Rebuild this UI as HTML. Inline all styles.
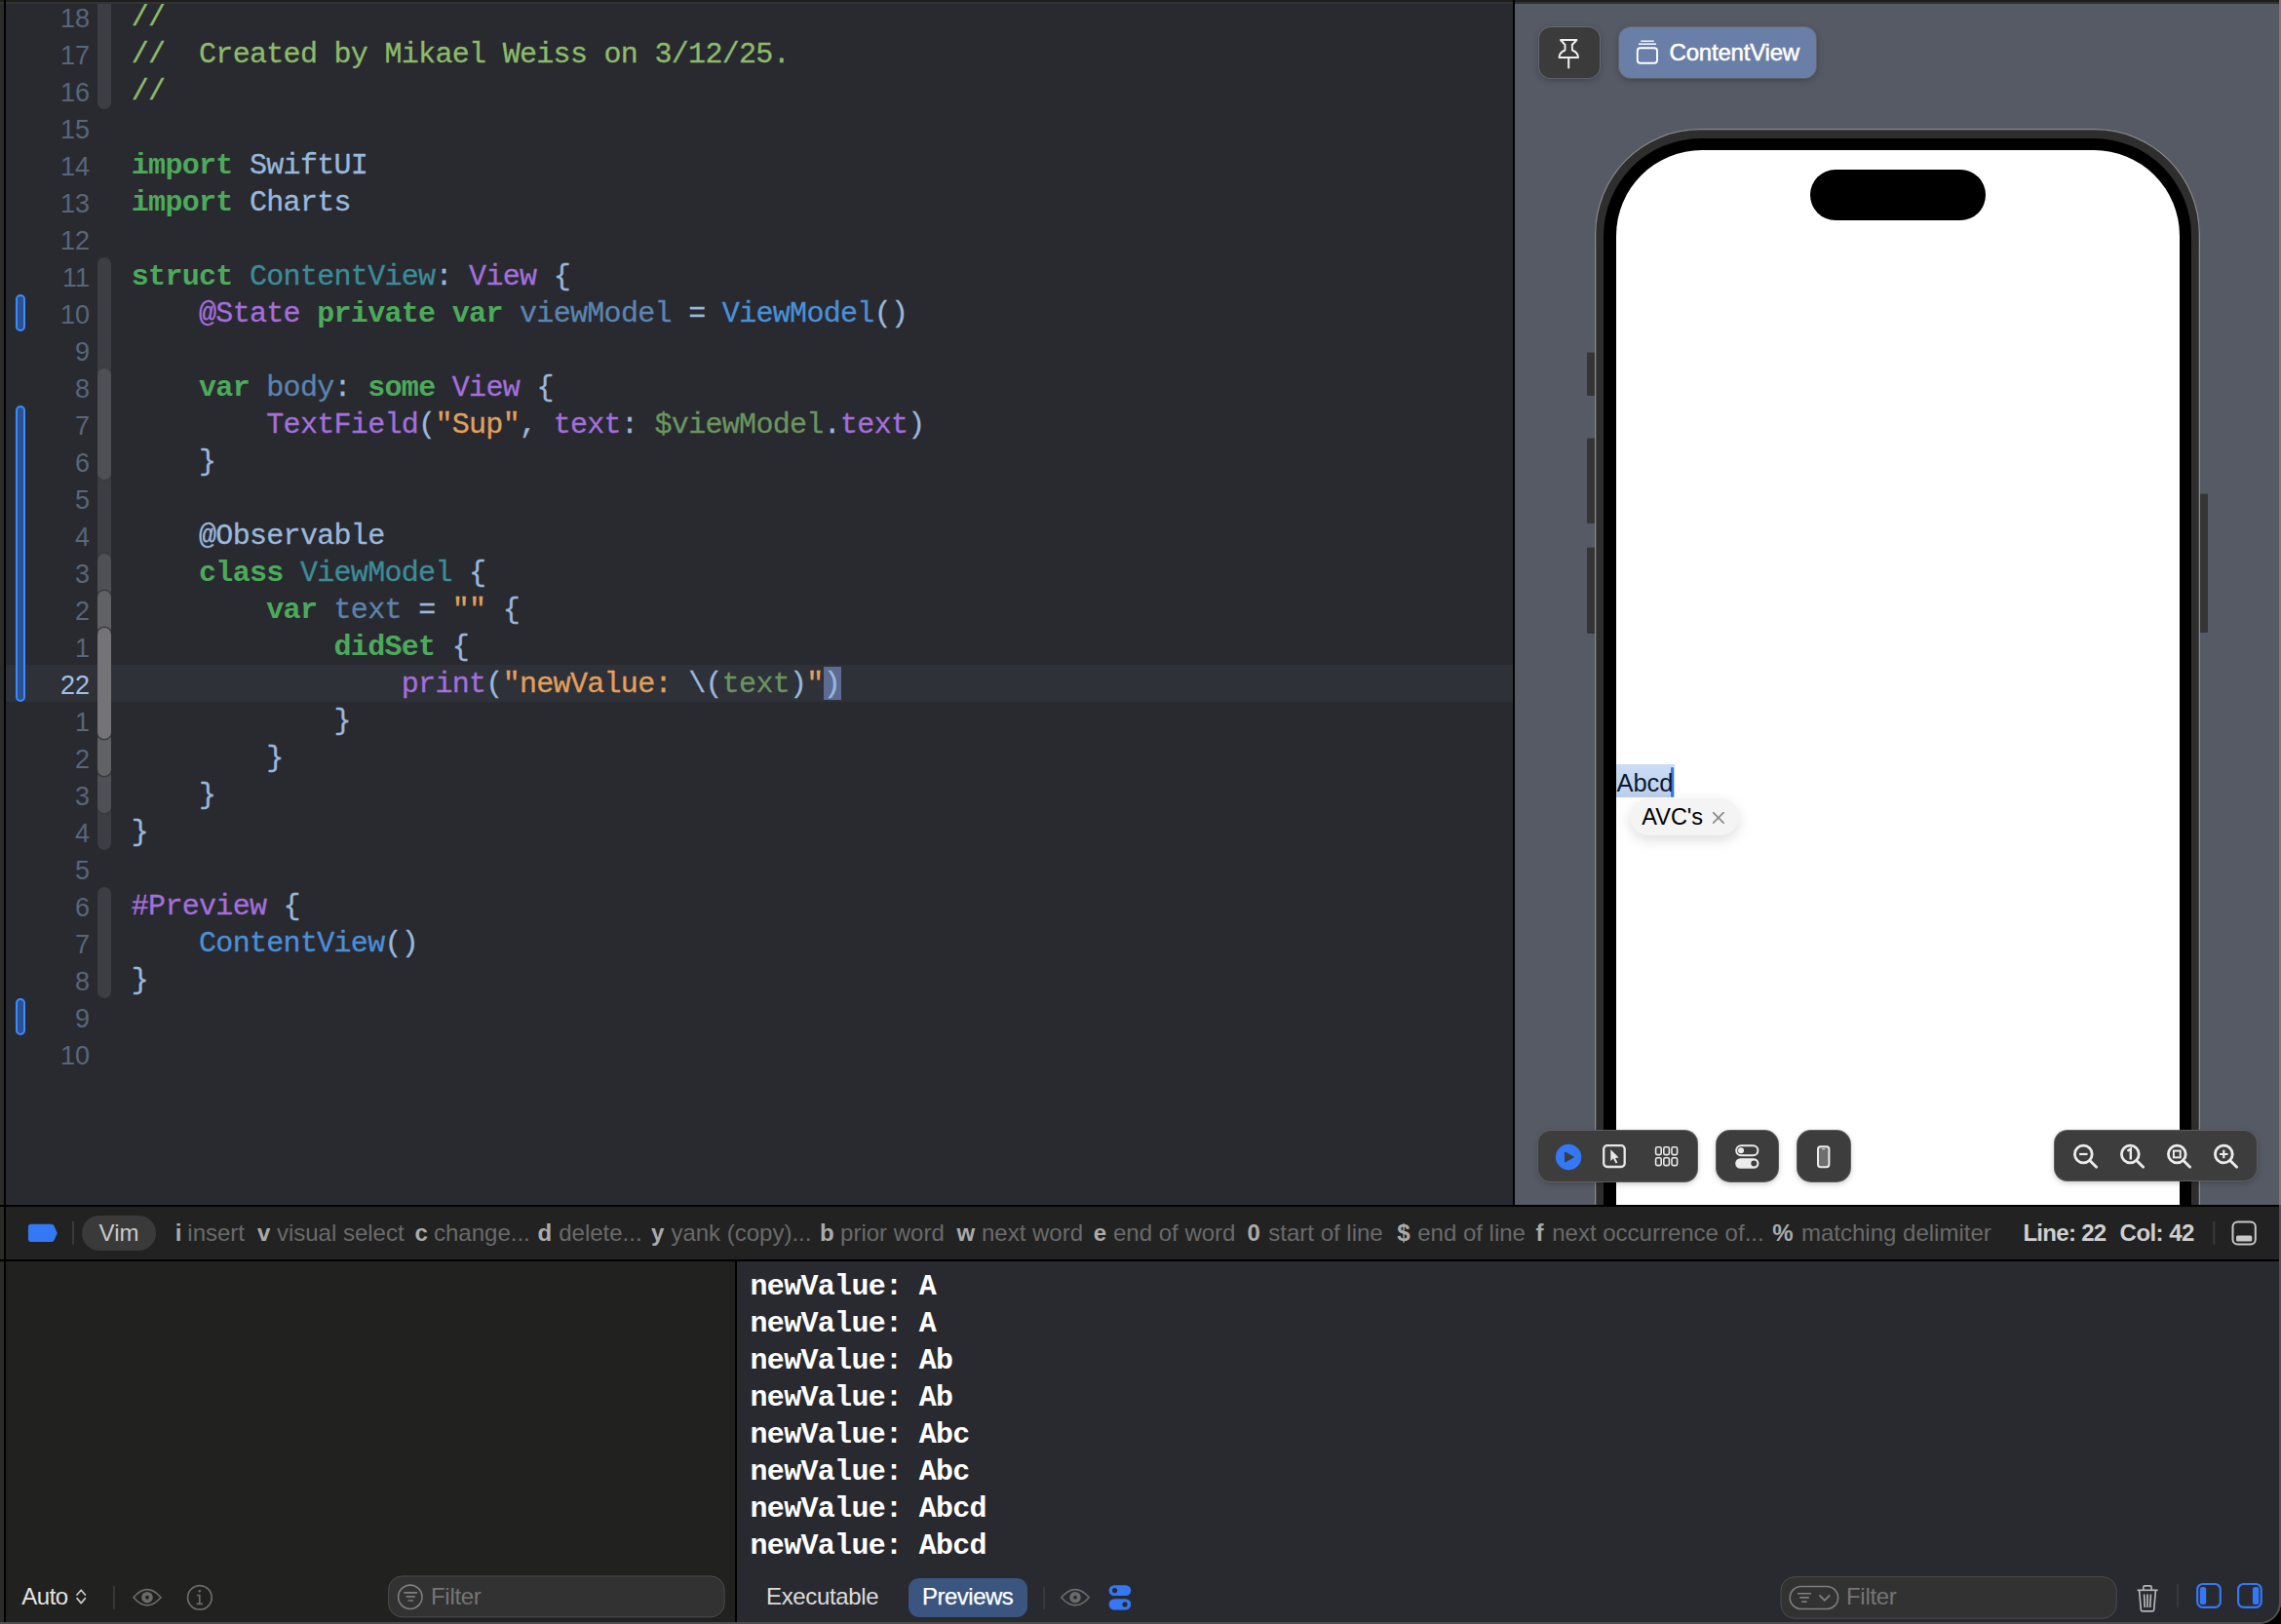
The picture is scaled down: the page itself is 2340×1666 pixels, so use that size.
<!DOCTYPE html>
<html><head><meta charset="utf-8">
<style>
*{margin:0;padding:0;box-sizing:border-box}
html,body{width:2340px;height:1666px;overflow:hidden;background:#000}
body{position:relative;font-family:"Liberation Sans",sans-serif}
.abs{position:absolute}
#win{position:absolute;left:0;top:0;width:2340px;height:1666px;background:#2b2b28;border-bottom-right-radius:22px;overflow:hidden}
#topstrip{position:absolute;left:0;top:0;width:2340px;height:2px;background:#1e1e1c}
#topstrip2{position:absolute;left:0;top:2px;width:2340px;height:2px;background:#33332f}
#rightstrip{position:absolute;right:0;top:0;width:2px;height:1666px;background:#76787c}
#editor{position:absolute;left:6px;top:4px;width:1546px;height:1232px;background:#292a30;overflow:hidden}
#code{position:absolute;left:0;top:0}
.ln{position:absolute;left:0;width:1546px;height:38px;line-height:38px;white-space:pre;font-family:"Liberation Mono",monospace;font-size:30px;letter-spacing:-0.69px;color:#99b8dc;-webkit-text-stroke-width:0.3px}
.num{position:absolute;width:86px;text-align:right;font-family:"Liberation Sans",sans-serif;font-size:27px;color:#58667a;height:38px;line-height:38px}
.k{color:#4caa5a;font-weight:bold;-webkit-text-stroke-width:0}
.c{color:#8cbb6a}
.t{color:#3c8c97}
.u{color:#a46fdd}
.v{color:#5b84b0}
.b{color:#4a90d9}
.s{color:#e2a05d}
.g{color:#6a955f}
.p{color:#99b8dc}
#canvas{position:absolute;left:1554px;top:4px;width:784px;height:1232px;background:#565a64;overflow:hidden}
#status{position:absolute;left:6px;top:1238px;width:2332px;height:54px;background:#222222}
#vars{position:absolute;left:6px;top:1294px;width:748px;height:370px;background:#21211f}
#console{position:absolute;left:756px;top:1294px;width:1582px;height:370px;background:#292a30}
.st{top:0;height:54px;line-height:54px;font-size:24px;color:#6a6a6a;white-space:nowrap}
.stk{font-weight:bold;color:#ababab}
.cl{height:38px;line-height:38px;white-space:pre;font-family:"Liberation Mono",monospace;font-size:30px;letter-spacing:-0.69px;font-weight:bold;color:#fff}
.bb{top:324px;height:40px;line-height:40px;font-size:24px;white-space:nowrap}
</style></head>
<body>
<div id="win">
<div id="topstrip"></div><div id="topstrip2"></div>
<div class="abs" style="left:4px;top:0;width:2px;height:1666px;background:#000"></div>
<div class="abs" style="left:0;top:1236px;width:2340px;height:2px;background:#000"></div>
<div class="abs" style="left:0;top:1292px;width:2340px;height:2px;background:#000"></div>
<div class="abs" style="left:1552px;top:0;width:2px;height:1238px;background:#000"></div>
<div class="abs" style="left:754px;top:1292px;width:2px;height:374px;background:#000"></div>

<div id="editor">
<div class="abs" style="left:0;top:678px;width:1546px;height:38px;background:#2f3138"></div>
<div class="abs" style="left:94px;top:0;width:14px;height:1232px;overflow:hidden">
<div class="abs" style="left:0;top:-6px;width:14px;height:114px;border-radius:7px;background:#3d3e44;"></div>
<div class="abs" style="left:0;top:260px;width:14px;height:608px;border-radius:7px;background:#3d3e44;"></div>
<div class="abs" style="left:0;top:374px;width:14px;height:114px;border-radius:7px;background:#4f5055;box-shadow:0 0 0 1.6px #3a3a3f;"></div>
<div class="abs" style="left:0;top:564px;width:14px;height:266px;border-radius:7px;background:#4f5055;box-shadow:0 0 0 1.6px #3a3a3f;"></div>
<div class="abs" style="left:0;top:602px;width:14px;height:190px;border-radius:7px;background:#616266;box-shadow:0 0 0 1.6px #3a3a3f;"></div>
<div class="abs" style="left:0;top:640px;width:14px;height:114px;border-radius:7px;background:#747477;box-shadow:0 0 0 1.6px #3a3a3f;"></div>
<div class="abs" style="left:0;top:906px;width:14px;height:114px;border-radius:7px;background:#3d3e44;"></div>
</div>
<div class="abs" style="left:839px;top:680px;width:18px;height:34px;background:#5b6b92"></div>
<div class="abs" style="left:10px;top:298px;width:10px;height:38px;border-radius:5px;background:#2c5190;border:2px solid #3b8bff"></div>
<div class="abs" style="left:10px;top:412px;width:10px;height:304px;border-radius:5px;background:#2c5190;border:2px solid #3b8bff"></div>
<div class="abs" style="left:10px;top:1020px;width:10px;height:38px;border-radius:5px;background:#2c5190;border:2px solid #3b8bff"></div>
<div class="num" style="left:0;top:-4.4px">18</div>
<div class="num" style="left:0;top:33.6px">17</div>
<div class="num" style="left:0;top:71.6px">16</div>
<div class="num" style="left:0;top:109.6px">15</div>
<div class="num" style="left:0;top:147.6px">14</div>
<div class="num" style="left:0;top:185.6px">13</div>
<div class="num" style="left:0;top:223.6px">12</div>
<div class="num" style="left:0;top:261.6px">11</div>
<div class="num" style="left:0;top:299.6px">10</div>
<div class="num" style="left:0;top:337.6px">9</div>
<div class="num" style="left:0;top:375.6px">8</div>
<div class="num" style="left:0;top:413.6px">7</div>
<div class="num" style="left:0;top:451.6px">6</div>
<div class="num" style="left:0;top:489.6px">5</div>
<div class="num" style="left:0;top:527.6px">4</div>
<div class="num" style="left:0;top:565.6px">3</div>
<div class="num" style="left:0;top:603.6px">2</div>
<div class="num" style="left:0;top:641.6px">1</div>
<div class="num" style="left:0;top:679.6px;color:#a3c0e4">22</div>
<div class="num" style="left:0;top:717.6px">1</div>
<div class="num" style="left:0;top:755.6px">2</div>
<div class="num" style="left:0;top:793.6px">3</div>
<div class="num" style="left:0;top:831.6px">4</div>
<div class="num" style="left:0;top:869.6px">5</div>
<div class="num" style="left:0;top:907.6px">6</div>
<div class="num" style="left:0;top:945.6px">7</div>
<div class="num" style="left:0;top:983.6px">8</div>
<div class="num" style="left:0;top:1021.6px">9</div>
<div class="num" style="left:0;top:1059.6px">10</div>
<div class="ln" style="left:128.75px;top:-5px"><span class="c">//</span></div>
<div class="ln" style="left:128.75px;top:33px"><span class="c">//  Created by Mikael Weiss on 3/12/25.</span></div>
<div class="ln" style="left:128.75px;top:71px"><span class="c">//</span></div>
<div class="ln" style="left:128.75px;top:109px"></div>
<div class="ln" style="left:128.75px;top:147px"><span class="k">import</span><span class="p"> SwiftUI</span></div>
<div class="ln" style="left:128.75px;top:185px"><span class="k">import</span><span class="p"> Charts</span></div>
<div class="ln" style="left:128.75px;top:223px"></div>
<div class="ln" style="left:128.75px;top:261px"><span class="k">struct</span><span class="p"> </span><span class="t">ContentView</span><span class="p">: </span><span class="u">View</span><span class="p"> {</span></div>
<div class="ln" style="left:128.75px;top:299px"><span class="p">    </span><span class="u">@State</span><span class="p"> </span><span class="k">private</span><span class="p"> </span><span class="k">var</span><span class="p"> </span><span class="v">viewModel</span><span class="p"> = </span><span class="b">ViewModel</span><span class="p">()</span></div>
<div class="ln" style="left:128.75px;top:337px"></div>
<div class="ln" style="left:128.75px;top:375px"><span class="p">    </span><span class="k">var</span><span class="p"> </span><span class="v">body</span><span class="p">: </span><span class="k">some</span><span class="p"> </span><span class="u">View</span><span class="p"> {</span></div>
<div class="ln" style="left:128.75px;top:413px"><span class="p">        </span><span class="u">TextField</span><span class="p">(</span><span class="s">&quot;Sup&quot;</span><span class="p">, </span><span class="u">text</span><span class="p">: </span><span class="g">$viewModel</span><span class="p">.</span><span class="u">text</span><span class="p">)</span></div>
<div class="ln" style="left:128.75px;top:451px"><span class="p">    }</span></div>
<div class="ln" style="left:128.75px;top:489px"></div>
<div class="ln" style="left:128.75px;top:527px"><span class="p">    @Observable</span></div>
<div class="ln" style="left:128.75px;top:565px"><span class="p">    </span><span class="k">class</span><span class="p"> </span><span class="t">ViewModel</span><span class="p"> {</span></div>
<div class="ln" style="left:128.75px;top:603px"><span class="p">        </span><span class="k">var</span><span class="p"> </span><span class="v">text</span><span class="p"> = </span><span class="s">&quot;&quot;</span><span class="p"> {</span></div>
<div class="ln" style="left:128.75px;top:641px"><span class="p">            </span><span class="k">didSet</span><span class="p"> {</span></div>
<div class="ln" style="left:128.75px;top:679px"><span class="p">                </span><span class="u">print</span><span class="p">(</span><span class="s">&quot;newValue: </span><span class="p">\(</span><span class="g">text</span><span class="p">)</span><span class="s">&quot;</span><span class="p">)</span></div>
<div class="ln" style="left:128.75px;top:717px"><span class="p">            }</span></div>
<div class="ln" style="left:128.75px;top:755px"><span class="p">        }</span></div>
<div class="ln" style="left:128.75px;top:793px"><span class="p">    }</span></div>
<div class="ln" style="left:128.75px;top:831px"><span class="p">}</span></div>
<div class="ln" style="left:128.75px;top:869px"></div>
<div class="ln" style="left:128.75px;top:907px"><span class="u">#Preview</span><span class="p"> {</span></div>
<div class="ln" style="left:128.75px;top:945px"><span class="p">    </span><span class="b">ContentView</span><span class="p">()</span></div>
<div class="ln" style="left:128.75px;top:983px"><span class="p">}</span></div>
<div class="ln" style="left:128.75px;top:1021px"></div>
<div class="ln" style="left:128.75px;top:1059px"></div>
</div>

<div id="canvas">
<!-- pin button -->
<div class="abs" style="left:24.5px;top:24px;width:62px;height:51.5px;border-radius:12px;background:#3b3b3b;box-shadow:0 0 0 1px rgba(255,255,255,.13),0 2px 7px rgba(0,0,0,.28)"></div>
<svg class="abs" style="left:0;top:0" width="784" height="120" viewBox="1554 4 784 120">
 <path d="M1601 41 L1617.5 41 L1612.8 46 L1613 51.5 Q1619 54 1619 59 L1599.5 59 Q1599.5 54 1605.5 51.5 L1605.5 46 Z" fill="none" stroke="#f0f0f0" stroke-width="1.9" stroke-linejoin="round"/>
 <path d="M1609.2 60 L1609.2 69.5" stroke="#f0f0f0" stroke-width="2" stroke-linecap="round"/>
</svg>
<!-- ContentView button -->
<div class="abs" style="left:107px;top:24px;width:202px;height:51.5px;border-radius:12px;background:#6a7fa8;box-shadow:0 0 0 1px rgba(255,255,255,.13),0 2px 7px rgba(0,0,0,.28)"></div>
<svg class="abs" style="left:0;top:0" width="784" height="120" viewBox="1554 4 784 120">
 <rect x="1679.8" y="49.2" width="20.2" height="15.6" rx="3" fill="none" stroke="#ffffff" stroke-width="1.9"/>
 <path d="M1681 45.2 L1699 45.2" stroke="#f4f4f4" stroke-width="1.6"/>
 <path d="M1683.3 42.2 L1696.8 42.2" stroke="#f4f4f4" stroke-width="1.5"/>
</svg>
<div class="abs" style="left:158.5px;top:35.6px;font-size:24px;line-height:28px;color:#ffffff;white-space:nowrap;letter-spacing:-0.2px;-webkit-text-stroke:0.5px #fff">ContentView</div>

<!-- phone -->
<div class="abs" style="left:73.6px;top:357px;width:9px;height:45px;background:#353535;border-radius:1.5px;box-shadow:inset 0 1px 0 #4a4a4a"></div>
<div class="abs" style="left:73.6px;top:444.6px;width:9px;height:88.5px;background:#353535;border-radius:1.5px;box-shadow:inset 0 1px 0 #4a4a4a"></div>
<div class="abs" style="left:73.6px;top:557px;width:9px;height:89px;background:#353535;border-radius:1.5px;box-shadow:inset 0 1px 0 #4a4a4a"></div>
<div class="abs" style="left:702px;top:502px;width:9px;height:143px;background:#353535;border-radius:1.5px;box-shadow:inset 0 1px 0 #4a4a4a"></div>
<div class="abs" style="left:82px;top:127.6px;width:621px;height:1300px;border-radius:108px;background:#2e2e2e;box-shadow:inset 0 0 0 1.3px #8a8a8c"></div>
<div class="abs" style="left:91px;top:137.5px;width:603px;height:1300px;border-radius:100px;background:#000"></div>
<div class="abs" style="left:104px;top:150px;width:578px;height:1300px;border-radius:88px;background:#fff"></div>
<div class="abs" style="left:302.5px;top:170.2px;width:180.5px;height:52.3px;border-radius:26px;background:#000"></div>

<!-- text field -->
<div class="abs" style="left:104px;top:780.2px;width:60px;height:33.8px;background:linear-gradient(#cadcf6,#bccfe9)"></div>
<div class="abs" style="left:160.3px;top:783px;width:2.7px;height:31px;background:#3478f6;border-radius:1.4px"></div>
<div class="abs" style="left:104.5px;top:777px;font-size:25.5px;line-height:44px;color:#0b1a33;white-space:nowrap;letter-spacing:-0.1px">Abcd</div>
<!-- autocorrect bubble -->
<div class="abs" style="left:117.9px;top:814.6px;width:112.6px;height:38.5px;border-radius:19.25px;background:#f4f4f4;box-shadow:0 5px 14px rgba(0,0,0,.13)"></div>
<div class="abs" style="left:130.3px;top:812.4px;font-size:23.5px;line-height:44px;color:#000;white-space:nowrap">AVC's</div>
<svg class="abs" style="left:202.8px;top:828.8px" width="12" height="12" viewBox="0 0 12 12"><path d="M0.6 0.6 L11.1 11.1 M11.1 0.6 L0.6 11.1" stroke="#8a8a8a" stroke-width="1.7" stroke-linecap="round"/></svg>

<!-- bottom toolbar -->
<div class="abs" style="left:24.3px;top:1156.1px;width:162.5px;height:51.7px;border-radius:13px;background:#3d3d3d;box-shadow:0 0 0 1px #5e5e5e,0 2px 6px rgba(0,0,0,.25)"></div>
<div class="abs" style="left:207.1px;top:1155.8px;width:62.5px;height:51.9px;border-radius:14px;background:#3d3d3d;box-shadow:0 0 0 1px #5e5e5e,0 2px 6px rgba(0,0,0,.25)"></div>
<div class="abs" style="left:290.3px;top:1155.8px;width:53.5px;height:51.9px;border-radius:14px;background:#3d3d3d;box-shadow:0 0 0 1px #5e5e5e,0 2px 6px rgba(0,0,0,.25)"></div>
<div class="abs" style="left:554.3px;top:1156.1px;width:207px;height:51.4px;border-radius:13px;background:#3d3d3d;box-shadow:0 0 0 1px #5e5e5e,0 2px 6px rgba(0,0,0,.25)"></div>
<svg class="abs" style="left:0;top:1140px" width="784" height="80" viewBox="1554 1144 784 80">
 <circle cx="1609.1" cy="1187" r="13.2" fill="#3478f6"/>
 <path d="M1605.5 1182 L1614.5 1187 L1605.5 1192 Z" fill="#3d3d3d" stroke="#3d3d3d" stroke-width="1" stroke-linejoin="round"/>
 <rect x="1645.2" y="1175.2" width="21.5" height="21.8" rx="3.5" fill="none" stroke="#e8e8e8" stroke-width="2.3"/>
 <path d="M1652.3 1179.3 L1652.3 1191 L1655 1188.6 L1657.6 1193.4 L1659.4 1192.6 L1657 1188 L1660.6 1187.6 Z" fill="#e8e8e8"/>
 <g fill="none" stroke="#e8e8e8" stroke-width="1.6">
  <rect x="1698.6" y="1176.8" width="5.6" height="7.8" rx="1.6"/><rect x="1706.8" y="1176.8" width="5.6" height="7.8" rx="1.6"/><rect x="1715" y="1176.8" width="5.6" height="7.8" rx="1.6"/>
  <rect x="1698.6" y="1187.8" width="5.6" height="7.8" rx="1.6"/><rect x="1706.8" y="1187.8" width="5.6" height="7.8" rx="1.6"/><rect x="1715" y="1187.8" width="5.6" height="7.8" rx="1.6"/>
 </g>
 <rect x="1781.2" y="1175.2" width="22.2" height="10" rx="5" fill="none" stroke="#ececec" stroke-width="2"/>
 <circle cx="1786" cy="1180.2" r="3" fill="#ececec"/>
 <rect x="1780.2" y="1188.2" width="24.2" height="10.5" rx="5.25" fill="#ececec"/>
 <circle cx="1799.3" cy="1193.5" r="3" fill="#3d3d3d"/>
 <rect x="1865" y="1176.2" width="11.4" height="21" rx="2.6" fill="#6e6e6e" stroke="#ececec" stroke-width="2"/>
 <path d="M1869.3 1178.8 L1872.2 1178.8" stroke="#ececec" stroke-width="1"/>
 <g fill="none" stroke="#ececec" stroke-width="2.8" stroke-linecap="round">
  <circle cx="2137.3" cy="1184" r="8.9"/><path d="M2143.8 1190.5 L2150.6 1197.3"/>
  <circle cx="2185.3" cy="1184" r="8.9"/><path d="M2191.8 1190.5 L2198.6 1197.3"/>
  <circle cx="2233.3" cy="1184" r="8.9"/><path d="M2239.8 1190.5 L2246.6 1197.3"/>
  <circle cx="2281.3" cy="1184" r="8.9"/><path d="M2287.8 1190.5 L2294.6 1197.3"/>
 </g>
 <path d="M2133.1 1184 L2141.5 1184" stroke="#ececec" stroke-width="2.2"/>
 <path d="M2182.4 1180.8 L2185.8 1178.6 L2185.8 1189.4" fill="none" stroke="#ececec" stroke-width="2.4"/>
 <rect x="2229.9" y="1180.6" width="6.8" height="6.8" fill="none" stroke="#ececec" stroke-width="2"/>
 <path d="M2277.1 1184 L2285.5 1184 M2281.3 1179.8 L2281.3 1188.2" stroke="#ececec" stroke-width="2.2"/>
</svg>

</div>

<div id="status">
<svg class="abs" style="left:0;top:0" width="2332" height="54" viewBox="6 1238 2332 54"><path d="M31.9 1255.8 L52.6 1255.8 Q54.4 1255.8 55.4 1257.3 L58.8 1264.9 L55.4 1272.6 Q54.4 1274.1 52.6 1274.1 L31.9 1274.1 Q28.9 1274.1 28.9 1271.1 L28.9 1258.8 Q28.9 1255.8 31.9 1255.8 Z" fill="#3478f6"/><rect x="74" y="1253" width="2" height="23.6" fill="#3a3a3a"/><rect x="2270.3" y="1253" width="2" height="23.6" fill="#3a3a3a"/><rect x="2290.5" y="1253.5" width="23.3" height="23" rx="5" fill="none" stroke="#c8c8c8" stroke-width="2"/><rect x="2294" y="1267.5" width="16.3" height="6" rx="1.5" fill="#c8c8c8"/></svg>
<div class="abs" style="left:78.3px;top:8.7px;width:75.6px;height:36px;border-radius:18px;background:#3a3a3a"></div>
<div class="abs st" style="left:95.6px;color:#c9c9c9">Vim</div>
<div class="abs st stk" style="left:173.7px">i</div>
<div class="abs st" style="left:186.3px">insert</div>
<div class="abs st stk" style="left:258.0px">v</div>
<div class="abs st" style="left:277.9px">visual select</div>
<div class="abs st stk" style="left:419.5px">c</div>
<div class="abs st" style="left:439.0px">change...</div>
<div class="abs st stk" style="left:545.5px">d</div>
<div class="abs st" style="left:567.2px">delete...</div>
<div class="abs st stk" style="left:661.9px">y</div>
<div class="abs st" style="left:682.4px">yank (copy)...</div>
<div class="abs st stk" style="left:835.1px">b</div>
<div class="abs st" style="left:856.1px">prior word</div>
<div class="abs st stk" style="left:975.4px">w</div>
<div class="abs st" style="left:1001.0px">next word</div>
<div class="abs st stk" style="left:1115.7px">e</div>
<div class="abs st" style="left:1136.0px">end of word</div>
<div class="abs st stk" style="left:1273.5px">0</div>
<div class="abs st" style="left:1295.3px">start of line</div>
<div class="abs st stk" style="left:1427.2px">$</div>
<div class="abs st" style="left:1448.2px">end of line</div>
<div class="abs st stk" style="left:1569.4px">f</div>
<div class="abs st" style="left:1586.2px">next occurrence of...</div>
<div class="abs st stk" style="left:1812.2px">%</div>
<div class="abs st" style="left:1842.0px">matching delimiter</div>
<div class="abs st stk" style="left:2069.4px;color:#cfcfcf;letter-spacing:-0.7px">Line: 22</div>
<div class="abs st stk" style="left:2168.6px;color:#cfcfcf;letter-spacing:-0.55px">Col: 42</div>
</div>

<div id="vars">
<svg class="abs" style="left:0;top:0" width="748" height="370" viewBox="6 1294 748 370">
 <path d="M79 1636 L83.2 1631.2 L87.4 1636 M79 1639.6 L83.2 1644.6 L87.4 1639.6" fill="none" stroke="#c8c8c8" stroke-width="1.7" stroke-linecap="round" stroke-linejoin="round"/>
 <rect x="116" y="1627" width="1.8" height="23.8" fill="#3a3a3a"/>
 <path d="M137 1638.7 Q151 1622.5 165 1638.7 Q151 1654.9 137 1638.7 Z" fill="none" stroke="#6a6a6a" stroke-width="1.7"/>
 <circle cx="151" cy="1638.7" r="5.8" fill="#6a6a6a"/><circle cx="151" cy="1638.7" r="1.9" fill="#21211f"/>
 <circle cx="204.9" cy="1638.9" r="12.3" fill="none" stroke="#6a6a6a" stroke-width="1.7"/>
 <circle cx="204.8" cy="1632.3" r="1.3" fill="#6a6a6a"/>
 <path d="M202.2 1636.7 L204.8 1636.7 L204.8 1645.3 M201.6 1645.3 L208 1645.3" fill="none" stroke="#6a6a6a" stroke-width="1.7"/>
 <rect x="398.6" y="1616.9" width="344.5" height="42" rx="14" fill="#323232" stroke="#4c4c4c" stroke-width="1"/>
 <circle cx="420.8" cy="1638.3" r="12.2" fill="none" stroke="#7e7e7e" stroke-width="1.6"/>
 <path d="M414.3 1633.9 L428.1 1633.9 M416.6 1637.9 L425.8 1637.9 M418.5 1642 L423.9 1642" stroke="#7e7e7e" stroke-width="1.6"/>
</svg>
<div class="abs bb" style="left:16.3px;color:#e4e4e4;letter-spacing:-0.5px">Auto</div>
<div class="abs bb" style="left:436px;color:#757575;letter-spacing:-0.3px">Filter</div>

</div>
<div id="console">
<div class="abs cl" style="left:13.50px;top:7.0px">newValue: A</div>
<div class="abs cl" style="left:13.50px;top:45.0px">newValue: A</div>
<div class="abs cl" style="left:13.50px;top:83.0px">newValue: Ab</div>
<div class="abs cl" style="left:13.50px;top:121.0px">newValue: Ab</div>
<div class="abs cl" style="left:13.50px;top:159.0px">newValue: Abc</div>
<div class="abs cl" style="left:13.50px;top:197.0px">newValue: Abc</div>
<div class="abs cl" style="left:13.50px;top:235.0px">newValue: Abcd</div>
<div class="abs cl" style="left:13.50px;top:273.0px">newValue: Abcd</div>
<div class="abs bb" style="left:30px;color:#dcdcdc;letter-spacing:-0.35px">Executable</div>
<div class="abs" style="left:175.8px;top:325px;width:122.2px;height:39.6px;border-radius:11px;background:#3a5580"></div>
<div class="abs bb" style="left:190px;color:#ffffff;letter-spacing:-0.5px;-webkit-text-stroke:0.25px #fff">Previews</div>
<svg class="abs" style="left:0;top:0" width="1582" height="370" viewBox="756 1294 1582 370">
 <rect x="1070.2" y="1627.5" width="1.8" height="23.3" fill="#3a3a3c"/>
 <path d="M1088.8 1638.7 Q1103 1622.5 1117.2 1638.7 Q1103 1654.9 1088.8 1638.7 Z" fill="none" stroke="#6a6a6a" stroke-width="1.7"/>
 <circle cx="1103" cy="1638.7" r="5.8" fill="#6a6a6a"/><circle cx="1103" cy="1638.7" r="1.9" fill="#292a30"/>
 <rect x="1137.6" y="1626.2" width="22.6" height="10.8" rx="5.4" fill="#3478f6"/>
 <circle cx="1143.6" cy="1631.6" r="2.6" fill="#292a30"/>
 <rect x="1137.6" y="1640.2" width="22.6" height="11.4" rx="5.7" fill="#3478f6"/>
 <circle cx="1154" cy="1645.9" r="2.6" fill="#292a30"/>
 <rect x="1827" y="1617.7" width="344.2" height="42.5" rx="14" fill="#323232" stroke="#4c4c4c" stroke-width="1"/>
 <rect x="1836.2" y="1627.5" width="49.4" height="23" rx="11.5" fill="none" stroke="#7e7e7e" stroke-width="1.6"/>
 <path d="M1844 1634.8 L1858 1634.8 M1846.3 1638.9 L1855.8 1638.9 M1848.4 1643.1 L1853.6 1643.1" stroke="#7e7e7e" stroke-width="1.6"/>
 <path d="M1867 1637 L1871.8 1641.8 L1876.6 1637" fill="none" stroke="#7e7e7e" stroke-width="1.8" stroke-linecap="round" stroke-linejoin="round"/>
 <g fill="none" stroke="#b4b4b4" stroke-width="1.7" stroke-linejoin="round">
  <path d="M2192.5 1631.3 L2213.6 1631.3"/>
  <path d="M2198.8 1631 L2198.8 1628.5 Q2198.8 1626.9 2200.4 1626.9 L2205.6 1626.9 Q2207.2 1626.9 2207.2 1628.5 L2207.2 1631"/>
  <path d="M2194.6 1631.5 L2196.3 1651.3 Q2196.5 1652.9 2198 1652.9 L2208 1652.9 Q2209.5 1652.9 2209.7 1651.3 L2211.4 1631.5"/>
  <path d="M2199.6 1635.5 L2200.3 1649 M2203 1635.5 L2203 1649 M2206.4 1635.5 L2205.7 1649"/>
 </g>
 <rect x="2233.2" y="1625" width="1.8" height="23.8" fill="#3a3a3c"/>
 <rect x="2254.2" y="1625" width="23.6" height="23.8" rx="5.5" fill="none" stroke="#3478f6" stroke-width="2.2"/>
 <rect x="2256.8" y="1628" width="6.4" height="18" rx="2.5" fill="#3478f6"/>
 <rect x="2296.1" y="1625" width="23.6" height="23.8" rx="5.5" fill="none" stroke="#3478f6" stroke-width="2.2"/>
 <rect x="2310.9" y="1628" width="6.4" height="18" rx="2.5" fill="#3478f6"/>
</svg>
<div class="abs bb" style="left:1138px;color:#757575;letter-spacing:-0.3px">Filter</div>

</div>
<!--ENDCONSOLE-->
<div class="abs" style="left:2290px;top:1616px;width:50px;height:50px;border-right:2px solid #505052;border-bottom:2px solid #4e4e50;border-bottom-right-radius:22px"></div>
<div class="abs" style="left:2338px;top:0;width:2px;height:1236px;background:#76787c"></div><div class="abs" style="left:2338px;top:1236px;width:2px;height:430px;background:#505052"></div>
<div class="abs" style="left:0;top:1664px;width:2340px;height:2px;background:#4e4e50"></div>
</div>
</body></html>
